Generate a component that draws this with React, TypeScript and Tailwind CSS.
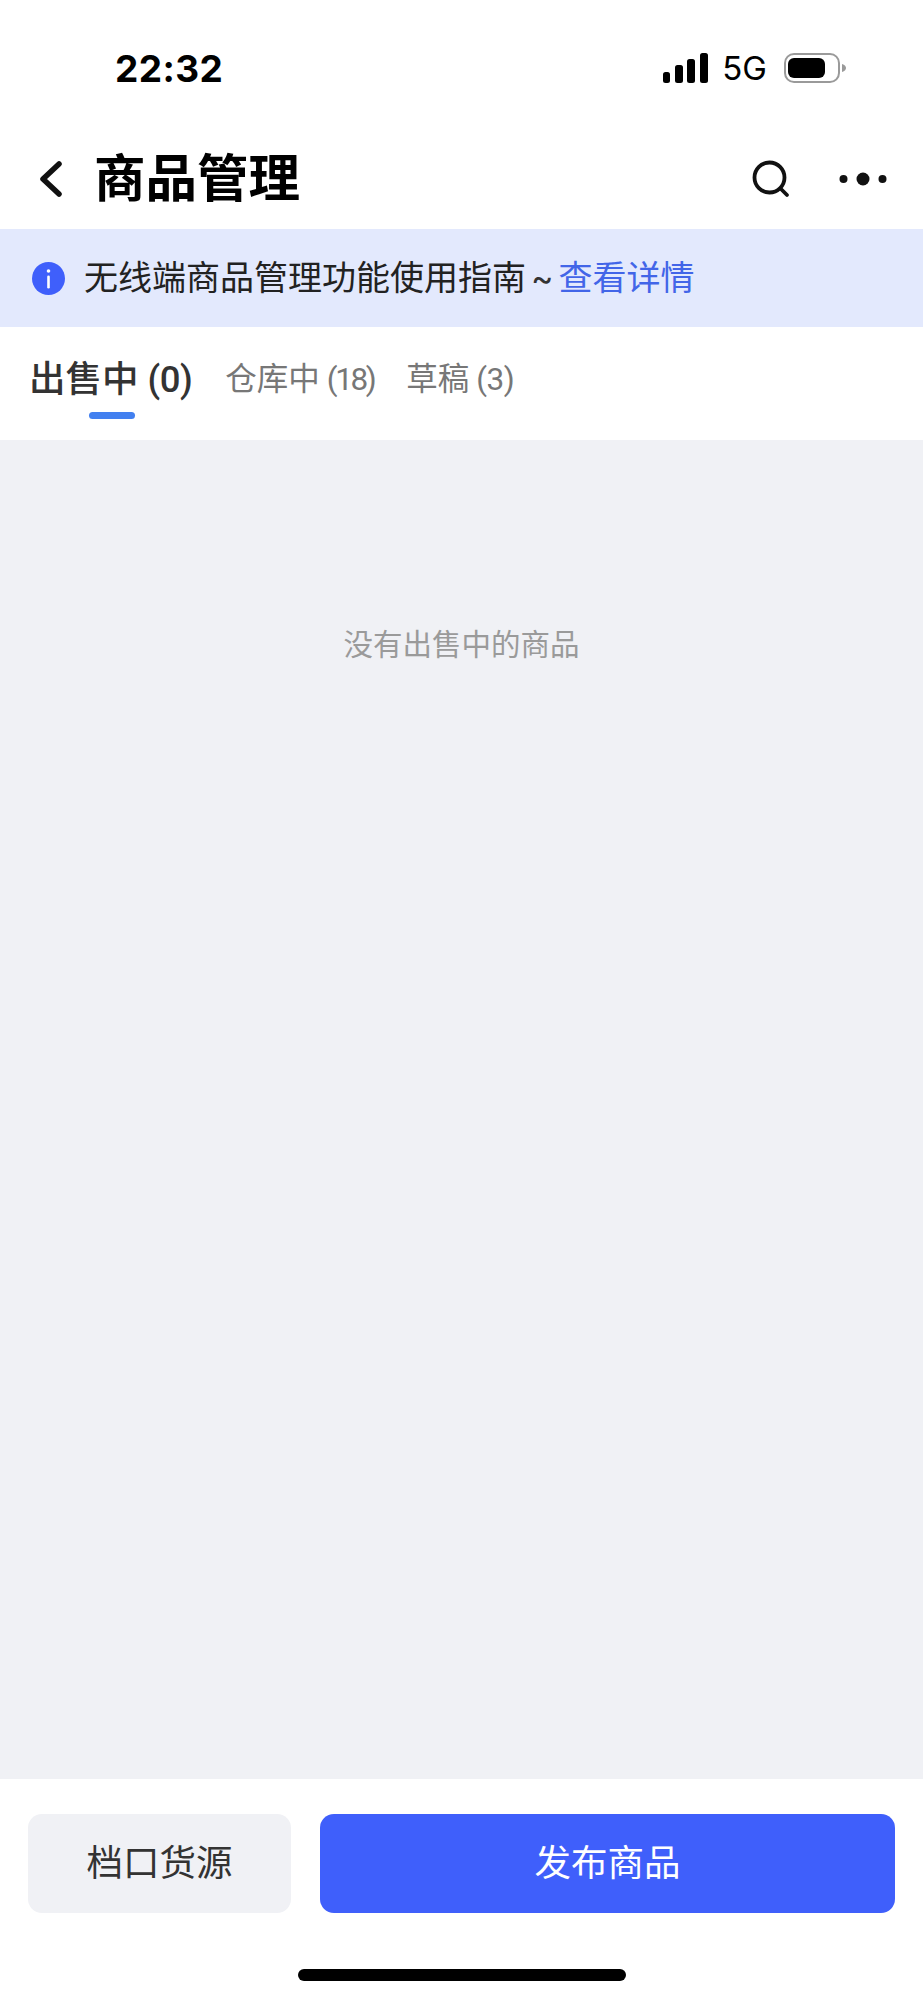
import React from "react";

const cjk = "font-['Inter','Noto_Sans_CJK_SC',sans-serif]";
const tabFont = "font-['Roboto','Noto_Sans_CJK_SC',sans-serif]";

function Signal() {
  return (
    <svg width="46" height="30" viewBox="0 0 46 30" fill="#000">
      <rect x="0" y="19" width="7" height="11" rx="2.5" />
      <rect x="12" y="12" width="8" height="18" rx="2.5" />
      <rect x="24" y="6" width="8" height="24" rx="2.5" />
      <rect x="37" y="0" width="8" height="30" rx="2.5" />
    </svg>
  );
}

function Battery() {
  return (
    <svg width="64" height="30" viewBox="0 0 64 30">
      <rect x="1" y="1" width="54" height="28" rx="9" fill="none" stroke="#9a9a9a" strokeWidth="2" />
      <rect x="4" y="5" width="37" height="20" rx="6" fill="#000" />
      <path d="M58 11 C61 12 62 13.5 62 15 C62 16.5 61 18 58 19 Z" fill="#9a9a9a" />
    </svg>
  );
}

export default function App() {
  return (
    <div className={`flex h-[2000px] w-[923px] flex-col bg-white ${cjk}`}>
      {/* status bar */}
      <div className="flex h-[138px] items-center justify-between pb-[2px] pl-[115px] pr-[75px]">
        <span className="text-[37px] font-bold leading-none tracking-[0.4px] text-black">22:32</span>
        <div className="flex items-center">
          <Signal />
          <span className="ml-[13px] text-[33px] font-normal leading-none text-black">5G</span>
          <span className="ml-[17px] flex">
            <Battery />
          </span>
        </div>
      </div>

      {/* nav bar */}
      <div className="flex h-[91px] items-center pb-[10px] pl-[39px] pr-[36px]">
        <svg width="23" height="36" viewBox="0 0 23 36" fill="none" stroke="#111" strokeWidth="5.5" strokeLinecap="round" strokeLinejoin="round">
          <path d="M20 3 L4 18 L20 33" />
        </svg>
        <h1 className="ml-[32px] text-[51.5px] font-bold leading-none text-black">商品管理</h1>
        <div className="ml-auto flex items-center">
          <svg width="38" height="38" viewBox="0 0 38 38" fill="none" stroke="#111" strokeWidth="3.8" strokeLinecap="round">
            <circle cx="17.5" cy="17.5" r="15" />
            <path d="M29 29 L35 35" />
          </svg>
          <svg className="ml-[49px]" width="48" height="14" viewBox="0 0 48 14" fill="#111">
            <circle cx="4.5" cy="7" r="4" />
            <circle cx="24" cy="7" r="6.5" />
            <circle cx="43.5" cy="7" r="4" />
          </svg>
        </div>
      </div>

      {/* notice banner */}
      <div className="flex h-[98px] items-center bg-[#e3e9fd] pl-[32px]">
        <svg width="33" height="33" viewBox="0 0 33 33">
          <circle cx="16.5" cy="16.5" r="16.5" fill="#3f5ffb" />
          <circle cx="16.5" cy="9" r="1.8" fill="#fff" />
          <rect x="15.2" y="13.5" width="2.6" height="13" rx="1.3" fill="#fff" />
        </svg>
        <p className="ml-[19px] text-[34px] leading-none text-[#222]">
          无线端商品管理功能使用指南
          <span className="mx-[5px] text-[#333]">~</span>
          <span className="text-[#4265e8]">查看详情</span>
        </p>
      </div>

      {/* tabs */}
      <div className={`flex h-[113px] items-start bg-white pl-[29px] ${tabFont}`}>
        <div className="relative mt-[30px] flex h-[46px] items-center">
          <span className="text-[36.5px] font-medium leading-none text-[#333]">
            出售中 <span className="tracking-[-0.5px]">(0)</span>
          </span>
          <span className="absolute left-[60px] top-[55px] h-[7px] w-[46px] rounded-full bg-[#4280f0]" />
        </div>
        <span className="ml-[33px] mt-[30px] flex h-[46px] items-center text-[31.5px] leading-none text-[#777]">
          <span>仓库中</span>
          <span className="ml-[7px] tracking-[-2.4px]">(18)</span>
        </span>
        <span className="ml-[32px] mt-[30px] flex h-[46px] items-center text-[31.5px] leading-none text-[#777]">
          <span>草稿</span>
          <span className="ml-[7px] tracking-[-0.5px]">(3)</span>
        </span>
      </div>

      {/* empty content */}
      <div className="flex flex-1 justify-center bg-[#f0f1f5] pt-[185px]">
        <span className="text-[29.5px] leading-[38px] text-[#9a9a9a]">没有出售中的商品</span>
      </div>

      {/* footer */}
      <div className="flex h-[221px] flex-col items-center bg-white">
        <div className="mt-[35px] flex h-[99px] w-full gap-[29px] pl-[28px] pr-[28px]">
          <button className="w-[263px] rounded-[14px] bg-[#f0f1f5] text-[36.5px] text-[#333]">档口货源</button>
          <button className="flex-1 rounded-[14px] bg-[#3f5ffb] text-[36.5px] text-white">发布商品</button>
        </div>
        <div className="mt-[56px] h-[12px] w-[328px] rounded-full bg-black" />
      </div>
    </div>
  );
}
